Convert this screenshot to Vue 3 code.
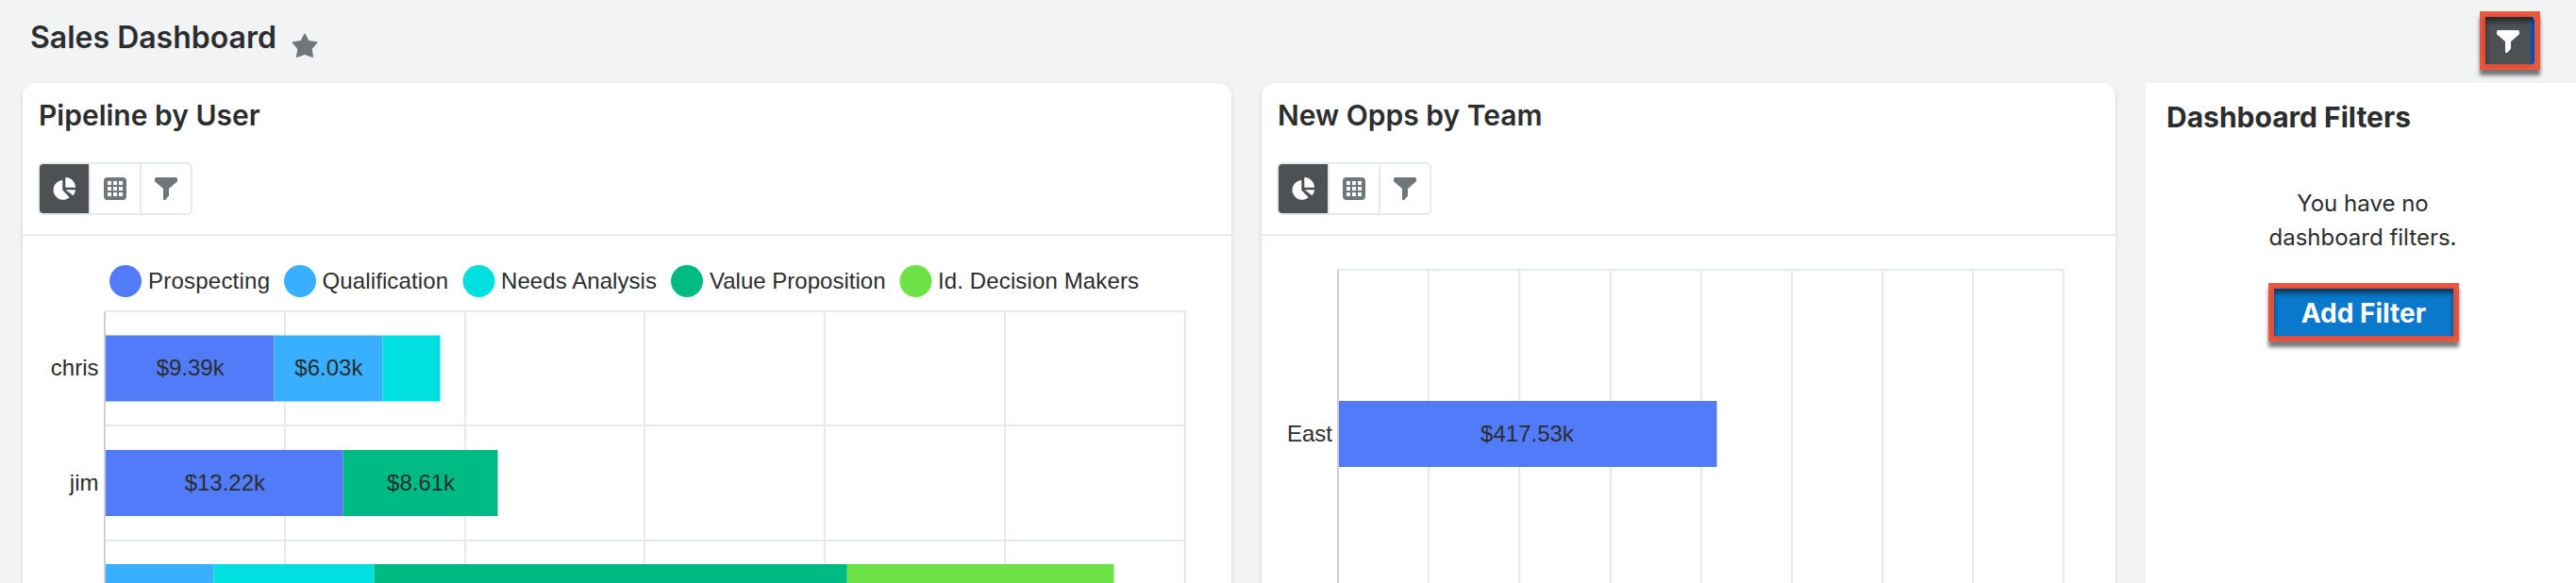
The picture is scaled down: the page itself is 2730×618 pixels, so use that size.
<script setup>
const grey = '#e5eaed'
const C = { prospecting: '#517bf8', qualification: '#38afff', needs: '#00e0e0', value: '#00ba83', makers: '#6de146' }

const legend = [
  { label: 'Prospecting', color: C.prospecting, cx: 133, x: 157, w: 129 },
  { label: 'Qualification', color: C.qualification, cx: 318, x: 341.5, w: 133.5 },
  { label: 'Needs Analysis', color: C.needs, cx: 507.5, x: 531, w: 165 },
  { label: 'Value Proposition', color: C.value, cx: 728, x: 752, w: 186.5 },
  { label: 'Id. Decision Makers', color: C.makers, cx: 970.5, x: 994, w: 213 },
]
const users = [
  { name: 'chris', y: 355.5, h: 70, segs: [[112, 290.4, C.prospecting, '$9.39k'], [290.4, 405.4, C.qualification, '$6.03k'], [405.4, 466.5, C.needs, '']] },
  { name: 'jim', y: 477, h: 70, segs: [[112, 363.7, C.prospecting, '$13.22k'], [363.7, 527.5, C.value, '$8.61k']] },
  { name: '', y: 598, h: 70, segs: [[112, 226.4, C.qualification, ''], [226.4, 396.5, C.needs, ''], [396.5, 897.8, C.value, ''], [897.8, 1180.5, C.makers, '']] },
]
const userGrid = [302, 493, 683, 874, 1065, 1256]
const teamGrid = [1514, 1610, 1707, 1803, 1899, 1995, 2091, 2187]
const cards = [
  { id: 'pipeline', title: 'Pipeline by User' },
  { id: 'opps', title: 'New Opps by Team' },
]
const funnel = 'M1.5 0h21A1.5 1.5 0 0 1 24 1.5v2.7L15 12v7.6L11.200 24H10a1 1 0 0 1-1-1V12L0 4.200V1.500A1.500 1.500 0 0 1 1.500 0z'
</script>

<template>
  <div class="page">
    <header class="top">
      <h1>Sales Dashboard</h1>
      <svg class="star" viewBox="0 0 28 27" width="28" height="27">
        <path d="M14 .8L18 8.400L27.200 9.900L21.300 16.800L22.500 25.600L14 22.400L5.500 25.600L6.700 16.800L.8 9.900L10 8.400z" fill="#6f777b" stroke="#6f777b" stroke-linejoin="round" />
      </svg>
      <button class="filter-toggle marked">
        <svg viewBox="0 0 24 24" width="24" height="24"><path :d="funnel" fill="#fff" /></svg>
        <span class="mark"></span>
      </button>
    </header>

    <main class="board">
      <section v-for="card in cards" :key="card.id" class="card" :class="card.id">
        <div class="card-head">
          <h2>{{ card.title }}</h2>
          <div class="group">
            <button class="on">
              <svg viewBox="0 0 24 24" width="24" height="24" fill="#fff">
                <path d="M10.300 3v10.600l7.400 7.700A10.400 10.400 0 1 1 10.300 3z" />
                <path d="M13.300 0A10.700 10.700 0 0 1 24 10.700H13.300z" />
                <path d="M13.600 13.200H24a10.500 10.500 0 0 1-2.400 6.100z" />
              </svg>
            </button>
            <button>
              <svg viewBox="0 0 24 24" width="24" height="24">
                <rect width="24" height="24" rx="4" fill="#6f777b" />
                <template v-for="r in 3" :key="r">
                  <rect v-for="c in 3" :key="c" :x="c * 6 - 2" :y="r * 6 - 2" width="4" height="4" fill="#fff" />
                </template>
              </svg>
            </button>
            <button>
              <svg viewBox="0 0 24 24" width="24" height="24"><path :d="funnel" fill="#6f777b" /></svg>
            </button>
          </div>
        </div>

        <svg v-if="card.id === 'pipeline'" class="chart" viewBox="24 250 1281 368" width="1281" height="368">
          <g v-for="l in legend" :key="l.label">
            <circle :cx="l.cx" cy="298" r="17" :fill="l.color" />
            <text :x="l.x" y="306" :textLength="l.w">{{ l.label }}</text>
          </g>
          <rect v-for="x in userGrid" :key="x" :x="x - 1" y="330" width="2" height="290" :fill="grey" />
          <rect v-for="y in [329, 450, 572]" :key="y" x="111" :y="y" width="1145" height="2" :fill="grey" />
          <rect x="110" y="330" width="2" height="290" fill="#cfd0d3" />
          <g v-for="u in users" :key="u.y">
            <text x="104.500" :y="u.y + 42.500" text-anchor="end">{{ u.name }}</text>
            <g v-for="s in u.segs" :key="s[0]">
              <rect :x="s[0]" :y="u.y" :width="s[1] - s[0]" :height="u.h" :fill="s[2]" />
              <text :x="(s[0] + s[1]) / 2 + .5" :y="u.y + 42.500" text-anchor="middle">{{ s[3] }}</text>
            </g>
          </g>
        </svg>

        <svg v-else class="chart" viewBox="1337 250 905 368" width="905" height="368">
          <rect v-for="x in teamGrid" :key="x" :x="x - 1" y="286" width="2" height="334" :fill="grey" />
          <rect x="1418" y="285" width="769" height="2" :fill="grey" />
          <rect x="1417" y="286" width="2" height="334" fill="#cfd0d3" />
          <rect x="1419" y="425" width="400.500" height="70" :fill="C.prospecting" />
          <text x="1412" y="468" text-anchor="end">East</text>
          <text x="1618.500" y="468" text-anchor="middle">$417.53k</text>
        </svg>
      </section>

      <aside class="panel">
        <h2>Dashboard Filters</h2>
        <p>You have no<br />dashboard filters.</p>
        <button class="add marked">Add Filter<span class="mark"></span></button>
      </aside>
    </main>
  </div>
</template>

<style>
body { margin: 0; overflow: hidden; }
</style>

<style scoped>
* { box-sizing: border-box; }
.page {
  width: 2730px;
  height: 618px;
  overflow: hidden;
  background: #f1f3f5;
  color: #2b2d2e;
  font-family: Inter, "Liberation Sans", sans-serif;
}
h1, h2, p { margin: 0; }
button { border: 0; padding: 0; background: none; font-family: inherit; display: flex; align-items: center; justify-content: center; }
svg { display: block; flex: none; }
.top { height: 88px; display: flex; align-items: flex-start; padding: 0 44px 0 32px; }
h1 { font-size: 32px; line-height: 80px; font-weight: 600; white-space: nowrap; width: 277px; }
.star { margin-top: 35px; }
.filter-toggle {
  margin: 16px 0 0 auto;
  width: 56px;
  height: 56px;
  border-radius: 8px;
  background: #4d5154;
  box-shadow: inset -4px 0 #0a5bc6;
}
.marked { position: relative; }
.mark {
  position: absolute;
  border: 6px solid rgba(235, 76, 52, .95);
  box-shadow: 0 6px 4px rgba(0, 0, 0, .52), inset 0 5px 5px rgba(0, 0, 0, .5);
}
.filter-toggle .mark { inset: -4px -6px -2px -2px; }
.board { display: flex; height: 530px; padding-left: 24px; gap: 32px; }
.card { background: #fff; border-radius: 14px 14px 0 0; box-shadow: 0 2px 4px rgba(0, 0, 0, .14); height: 560px; flex: none; }
.pipeline { width: 1281px; }
.opps { width: 905px; }
.card-head { height: 162px; padding: 0 16px; border-bottom: 2px solid #e5eaed; }
h2 { font-size: 30px; line-height: 68px; font-weight: 600; white-space: nowrap; padding-left: 1px; }
.group { margin-top: 16px; width: 164px; height: 56px; display: flex; border: 2px solid #e5eaed; border-radius: 6px; overflow: hidden; }
.group button { width: 54px; height: 52px; border-right: 2px solid #e5eaed; }
.group button:last-child { width: 52px; border-right: 0; }
.group .on { background: #4d5154; }
.chart text { font: 24px "Liberation Sans", Arial, sans-serif; fill: #2b2d2e; }
.panel { flex: 1; height: 560px; background: #fff; padding-left: 21px; display: flex; flex-direction: column; }
.panel h2 { line-height: 72px; font-weight: 700; }
.panel p { width: 418px; margin-top: 38px; text-align: center; font-size: 24px; line-height: 36px; }
.add {
  margin: 34px 0 0 111px;
  width: 198px;
  height: 56px;
  border-radius: 8px;
  background: #0a78cb;
  color: #fff;
  font-size: 28px;
  font-weight: 700;
  white-space: nowrap;
}
.add .mark { inset: -4px -2px -2px -2px; }
</style>
